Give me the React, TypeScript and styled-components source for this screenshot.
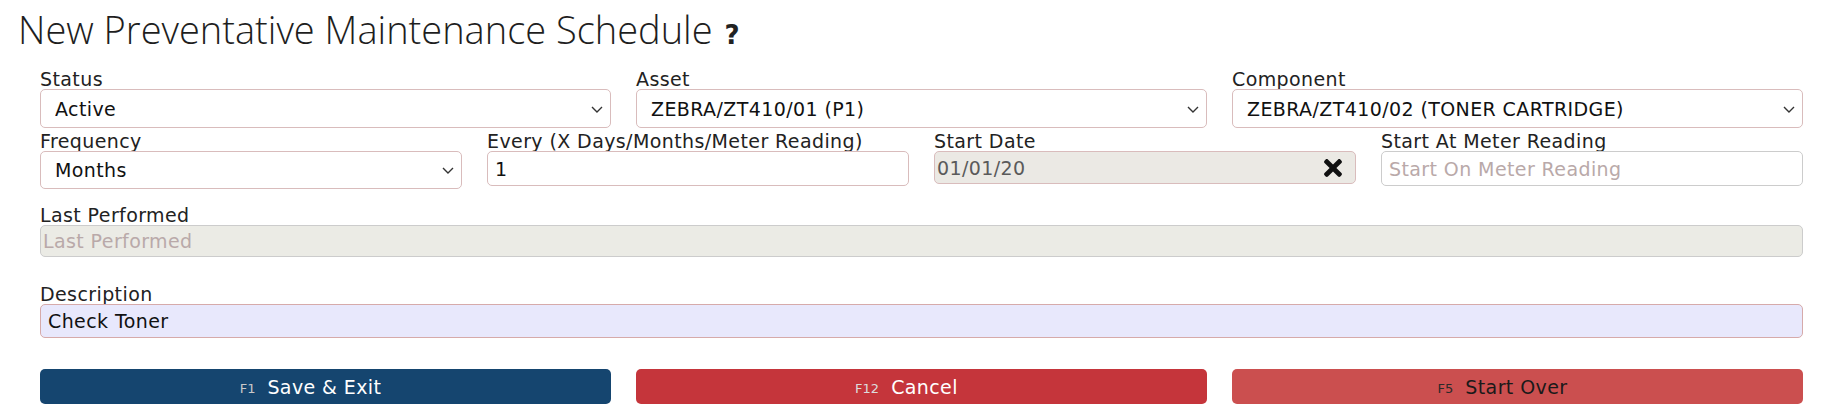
import styled, { createGlobalStyle } from "styled-components";
import { FaTimes } from "react-icons/fa";

const GlobalStyle = createGlobalStyle`
  body {
    margin: 0;
    background: #fff;
    font-family: "DejaVu Sans", Verdana, sans-serif;
    color: #222;
  }
  * { box-sizing: border-box; }
`;

const Page = styled.div`
  width: 1842px;
  padding: 7px 39px 0 18px;
`;

const Title = styled.h1`
  margin: 0;
  height: 44px;
  font-family: "Open Sans", sans-serif;
  font-weight: 300;
  font-size: 38px;
  line-height: 44px;
  color: #1e1e1e;
  display: flex;
  align-items: baseline;
  gap: 12px;
`;

const Help = styled.span`
  font-family: "DejaVu Sans", sans-serif;
  font-weight: bold;
  font-size: 26px;
  line-height: 26px;
  color: #222;
`;

const Form = styled.form`
  margin-top: 18px;
  padding-left: 22px;
`;

const Row = styled.div<{ cols: number; gapBelow: number }>`
  display: grid;
  grid-template-columns: repeat(${(p) => p.cols}, 1fr);
  column-gap: 25px;
  align-items: start;
  margin-bottom: ${(p) => p.gapBelow}px;
`;

const Field = styled.div`
  display: flex;
  flex-direction: column;
`;

const Label = styled.label`
  font-size: 19px;
  letter-spacing: 0.4px;
  line-height: 20px;
  color: #222;
  white-space: nowrap;
`;

const Wrap = styled.div`
  position: relative;
`;

const Select = styled.select<{ h: number }>`
  appearance: none;
  width: 100%;
  height: ${(p) => p.h}px;
  border: 1px solid #d9bcbc;
  border-radius: 5px;
  background: #fff;
  padding: 0 34px 0 14px;
  font-family: inherit;
  font-size: 19px;
  letter-spacing: 0.4px;
  color: #111;
  outline: none;
`;

const Chevron = styled.svg`
  position: absolute;
  right: 8px;
  top: 50%;
  margin-top: -3px;
  pointer-events: none;
`;

const Input = styled.input<{
  h: number;
  bg?: string;
  border?: string;
  pad?: number;
}>`
  width: 100%;
  height: ${(p) => p.h}px;
  border: 1px solid ${(p) => p.border || "#d9bcbc"};
  border-radius: 5px;
  background: ${(p) => p.bg || "#fff"};
  padding: 0 ${(p) => p.pad ?? 7}px;
  font-family: inherit;
  font-size: 19px;
  letter-spacing: 0.4px;
  color: #111;
  outline: none;

  &::placeholder {
    color: #b9a9a9;
  }

  &:disabled {
    color: #5a5a5a;
  }
`;

const ClearIcon = styled.span`
  position: absolute;
  right: 10px;
  top: 50%;
  transform: translateY(-50%);
  display: flex;
  color: #111;
`;

const Button = styled.button<{ bg: string; fg: string }>`
  height: 35px;
  border: none;
  border-radius: 5px;
  background: ${(p) => p.bg};
  color: ${(p) => p.fg};
  font-family: inherit;
  font-size: 19px;
  letter-spacing: 0.4px;
  padding: 0 30px 0 0;
  display: flex;
  align-items: center;
  justify-content: center;
  cursor: pointer;
`;

const Key = styled.span<{ fg: string }>`
  font-size: 13px;
  letter-spacing: 0;
  color: ${(p) => p.fg};
  margin-right: 12px;
  padding-top: 3px;
`;

const Arrow = () => (
  <Chevron width="12" height="7" viewBox="0 0 12 7">
    <polyline
      points="1,1 6,6 11,1"
      fill="none"
      stroke="#333"
      strokeWidth="1.4"
    />
  </Chevron>
);

const SelectField = ({
  label,
  value,
  h,
}: {
  label: string;
  value: string;
  h: number;
}) => (
  <Field>
    <Label>{label}</Label>
    <Wrap>
      <Select h={h} defaultValue={value}>
        <option>{value}</option>
      </Select>
      <Arrow />
    </Wrap>
  </Field>
);

const App = () => {
  return (
    <Page>
      <GlobalStyle />
      <Title>
        New Preventative Maintenance Schedule <Help>?</Help>
      </Title>
      <Form onSubmit={(e) => e.preventDefault()}>
        <Row cols={3} gapBelow={3}>
          <SelectField label="Status" value="Active" h={39} />
          <SelectField label="Asset" value="ZEBRA/ZT410/01 (P1)" h={39} />
          <SelectField
            label="Component"
            value="ZEBRA/ZT410/02 (TONER CARTRIDGE)"
            h={39}
          />
        </Row>

        <Row cols={4} gapBelow={16}>
          <SelectField label="Frequency" value="Months" h={38} />
          <Field>
            <Label>Every (X Days/Months/Meter Reading)</Label>
            <Input h={35} defaultValue="1" />
          </Field>
          <Field>
            <Label>Start Date</Label>
            <Wrap>
              <Input
                h={33}
                bg="#ebe9e4"
                pad={2}
                defaultValue="01/01/20"
                disabled
              />
              <ClearIcon>
                <FaTimes size={26} />
              </ClearIcon>
            </Wrap>
          </Field>
          <Field>
            <Label>Start At Meter Reading</Label>
            <Input
              h={35}
              border="#cccccc"
              pad={7}
              placeholder="Start On Meter Reading"
            />
          </Field>
        </Row>

        <Row cols={1} gapBelow={27}>
          <Field>
            <Label>Last Performed</Label>
            <Input
              h={32}
              bg="#ebebe5"
              border="#cccccc"
              pad={2}
              placeholder="Last Performed"
              disabled
            />
          </Field>
        </Row>

        <Row cols={1} gapBelow={31}>
          <Field>
            <Label>Description</Label>
            <Input
              h={34}
              bg="#e8e8fc"
              border="#d6aaaa"
              defaultValue="Check Toner"
            />
          </Field>
        </Row>

        <Row cols={3} gapBelow={0}>
          <Button type="submit" bg="#15456f" fg="#fff">
            <Key fg="#c9c9c9">F1</Key>Save &amp; Exit
          </Button>
          <Button type="button" bg="#c5353b" fg="#fff">
            <Key fg="#dcdcdc">F12</Key>Cancel
          </Button>
          <Button type="button" bg="#cb4f4f" fg="#1a1a1a">
            <Key fg="#2a2a2a">F5</Key>Start Over
          </Button>
        </Row>
      </Form>
    </Page>
  );
};

export default App;
